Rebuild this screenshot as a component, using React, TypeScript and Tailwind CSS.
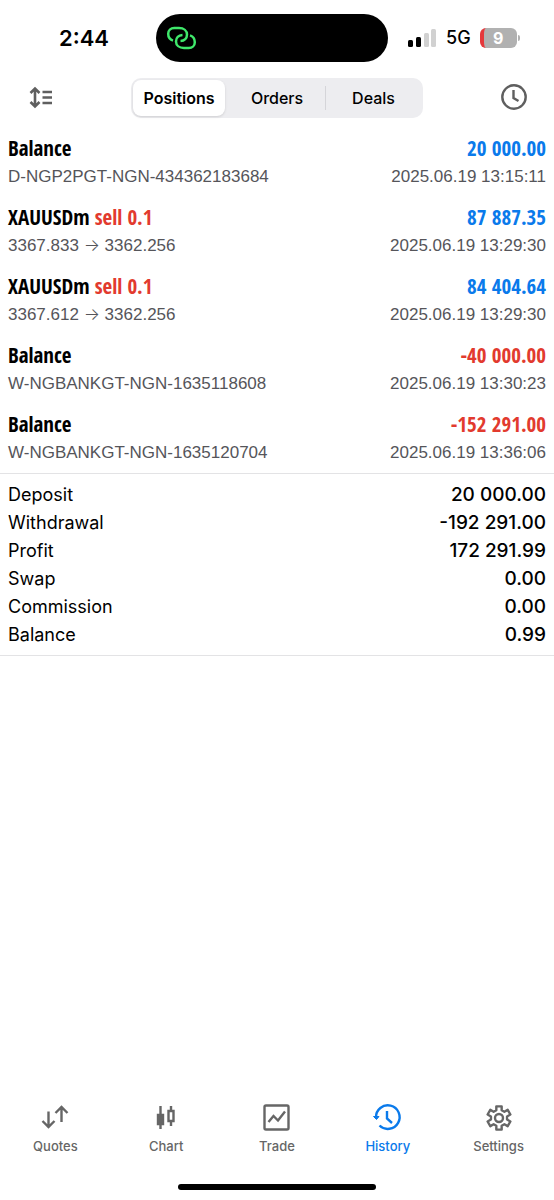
import { ReactNode, useState } from "react";

interface Deal {
    id: number;
    title: string;
    action?: string;
    amount: string;
    details: ReactNode;
    time: string;
}

function PriceMove({ from, to }: { from: string; to: string }) {
    return <>{from} <span className="font-[Inter,sans-serif] leading-none font-light">→</span> {to}</>;
}

const deals: Deal[] = [
    { id: 1, title: 'Balance', amount: '20 000.00', details: 'D-NGP2PGT-NGN-434362183684', time: '2025.06.19 13:15:11' },
    { id: 2, title: 'XAUUSDm', action: 'sell 0.1', amount: '87 887.35', details: <PriceMove from="3367.833" to="3362.256" />, time: '2025.06.19 13:29:30' },
    { id: 3, title: 'XAUUSDm', action: 'sell 0.1', amount: '84 404.64', details: <PriceMove from="3367.612" to="3362.256" />, time: '2025.06.19 13:29:30' },
    { id: 4, title: 'Balance', amount: '-40 000.00', details: 'W-NGBANKGT-NGN-1635118608', time: '2025.06.19 13:30:23' },
    { id: 5, title: 'Balance', amount: '-152 291.00', details: 'W-NGBANKGT-NGN-1635120704', time: '2025.06.19 13:36:06' },
];

const summary = [
    { label: 'Deposit', value: '20 000.00' },
    { label: 'Withdrawal', value: '-192 291.00' },
    { label: 'Profit', value: '172 291.99' },
    { label: 'Swap', value: '0.00' },
    { label: 'Commission', value: '0.00' },
    { label: 'Balance', value: '0.99' },
];

const segments = ['Positions', 'Orders', 'Deals'];

// six-toothed gear outline around 16,16
const gearPoints = [0, 60, 120, 180, 240, 300]
    .flatMap((tooth) => [[-19, 8.2], [-13, 11.9], [13, 11.9], [19, 8.2]].map(([turn, radius]) => {
        const angle = ((tooth + turn) * Math.PI) / 180;
        return `${(16 + radius * Math.sin(angle)).toFixed(2)},${(16 - radius * Math.cos(angle)).toFixed(2)}`;
    }))
    .join(' ');

function Icon({ children }: { children: ReactNode }) {
    return (
        <svg className="size-8" viewBox="0 0 32 32" fill="none" stroke="currentColor" strokeWidth="2.4" aria-hidden="true">
            {children}
        </svg>
    );
}

const tabs = [
    {
        name: 'Quotes',
        icon: <Icon><path d="M9.5 9.5v15M3.5 19l6 6 6-6M22.5 20V5M16.5 11l6-6 6 6" /></Icon>,
    },
    {
        name: 'Chart',
        icon: (
            <Icon>
                <path d="M10.5 4v23M21 4v5M21 19v5" />
                <path d="M8 13h5v9H8z" fill="currentColor" />
                <path d="M18.5 9h5v10h-5z" />
            </Icon>
        ),
    },
    {
        name: 'Trade',
        icon: (
            <Icon>
                <rect x="3.5" y="3.5" width="24" height="24" rx="1.5" />
                <path d="M7.5 20l5-6 4.5 4.5 7-9" />
            </Icon>
        ),
    },
    {
        name: 'History',
        icon: (
            <Icon>
                <path d="M4 15.5A11.8 11.8 0 1 1 7.500 23.5" />
                <path d="M1.500 14.500h5.500l-2.500 3z" fill="currentColor" strokeWidth="1" />
                <path d="M15 9v7.500l5 4.500" />
            </Icon>
        ),
    },
    {
        name: 'Settings',
        icon: (
            <Icon>
                <polygon points={gearPoints} strokeLinejoin="round" />
                <circle cx="16" cy="16" r="4" />
            </Icon>
        ),
    },
];

function StatusBar() {
    return (
        <div className="grid grid-cols-[156fr_232fr_166fr] items-center pt-[14px]">
            <span className="pl-3 text-center text-[22px] font-semibold">2:44</span>
            <div className="flex h-12 items-center rounded-full bg-black pl-[10px]">
                <svg className="h-6 w-8 text-[#3fe86b]" viewBox="0 0 32 24" fill="none" stroke="currentColor" strokeWidth="2.5" aria-hidden="true">
                    <path d="M7 14.6C3.7 13.5 2.200 11 2.200 7.800 2.200 4.500 4.800 2 8.200 2H13c4.800 0 8 2.800 8 6.500 0 3.700-2.500 6.300-6.500 6.500" />
                    <path d="M24 9.400c3.300 1.100 4.800 3.600 4.800 6.800 0 3.300-2.600 5.800-6 5.800H18c-4.800 0-8-2.800-8-6.500 0-3.700 2.500-6.300 6.500-6.500" />
                </svg>
            </div>
            <div className="flex items-center pl-5">
                <svg className="h-[18px] w-7" viewBox="0 0 28 18" aria-hidden="true">
                    <rect x="0" y="11" width="5" height="7" rx="1.5" />
                    <rect x="8" y="8" width="5" height="10" rx="1.5" />
                    <rect x="16" y="4" width="5" height="14" rx="1.5" fill="#d1d1d1" />
                    <rect x="23" y="0" width="5" height="18" rx="1.5" fill="#d1d1d1" />
                </svg>
                <span className="ml-[10px] text-lg font-medium">5G</span>
                <div className="ml-[9px] flex items-center gap-px">
                    <span className="h-5 w-[37px] overflow-hidden rounded-md border-l-4 border-[#e5383b] bg-[#b1b1b1] pr-1 text-center text-base/5 font-bold text-white">9</span>
                    <span className="h-[6px] w-[2px] rounded-r-full bg-[#b1b1b1]" />
                </div>
            </div>
        </div>
    );
}

export default function HistoryPage() {
    const [segment, setSegment] = useState('Positions');
    const [tab, setTab] = useState('History');

    return (
        <div className="flex min-h-screen flex-col bg-white font-[Inter,sans-serif] text-black">
            <StatusBar />

            <header className="flex items-center justify-between px-6 pt-4">
                <button aria-label="Sort" className="text-[#5f5f5f]">
                    <svg className="size-8" viewBox="0 0 32 32" fill="none" stroke="currentColor" strokeWidth="2.6" aria-hidden="true">
                        <path d="M11 7v17M6.5 11l4.5-4.5 4.5 4.5M6.5 20l4.5 4.5 4.5-4.5M18.5 10h9.5M18.5 15.5h9.5M18.5 21h9.5" />
                    </svg>
                </button>
                <div className="grid h-10 w-[292px] grid-cols-3 items-center rounded-[10px] bg-[#ededf0] p-[2px]">
                    {segments.map((name) => (
                        <button
                            key={name}
                            onClick={() => setSegment(name)}
                            aria-pressed={segment === name}
                            className={segment === name
                                ? 'mr-1 h-9 rounded-lg bg-white text-base font-semibold shadow'
                                : 'h-6 border-[#d5d5d9] text-base font-medium last:border-l'}
                        >
                            {name}
                        </button>
                    ))}
                </div>
                <button aria-label="Period" className="text-[#5f5f5f]">
                    <svg className="size-8" viewBox="0 0 32 32" fill="none" stroke="currentColor" strokeWidth="2.4" aria-hidden="true">
                        <circle cx="16" cy="15" r="11.7" />
                        <path d="M15.5 8v8l5 3" />
                    </svg>
                </button>
            </header>

            <main>
                <ul className="border-b border-[#e3e3e5] pt-4">
                    {deals.map((deal) => (
                        <li key={deal.id} className="px-2 pb-3 last:pb-[6px]">
                            <div className="flex justify-between font-['Avenir_Next_Condensed','Open_Sans_Condensed','Noto_Sans_Condensed','Roboto_Condensed',Roboto,sans-serif] text-[21px]/7 font-bold">
                                <span>
                                    {deal.title} {deal.action && <span className="text-[#e23a2e]">{deal.action}</span>}
                                </span>
                                <span className={deal.amount.startsWith('-') ? 'text-[#e23a2e]' : 'text-[#0a7aeb]'}>{deal.amount}</span>
                            </div>
                            <div className="mt-px flex justify-between font-['Liberation_Sans',sans-serif] text-[17px]/7 text-[#55555a]">
                                <span>{deal.details}</span>
                                <span>{deal.time}</span>
                            </div>
                        </li>
                    ))}
                </ul>

                <dl className="border-b border-[#e3e3e5] px-2 pt-[7px] pb-[6px] text-[19px]/7">
                    {summary.map((row) => (
                        <div key={row.label} className="flex justify-between">
                            <dt className="text-lg/7">{row.label}</dt>
                            <dd className="font-medium">{row.value}</dd>
                        </div>
                    ))}
                </dl>
            </main>

            <nav className="mt-auto grid grid-cols-5">
                {tabs.map((item) => (
                    <button
                        key={item.name}
                        onClick={() => setTab(item.name)}
                        className={`flex flex-col items-center gap-[2px] text-[13px]/5 font-medium ${tab === item.name ? 'text-[#0a7aeb]' : 'text-[#666666]'}`}
                    >
                        {item.icon}
                        {item.name}
                    </button>
                ))}
            </nav>
            <div className="mx-auto mt-7 mb-[10px] h-[6px] w-[198px] rounded-full bg-black" />
        </div>
    );
}
